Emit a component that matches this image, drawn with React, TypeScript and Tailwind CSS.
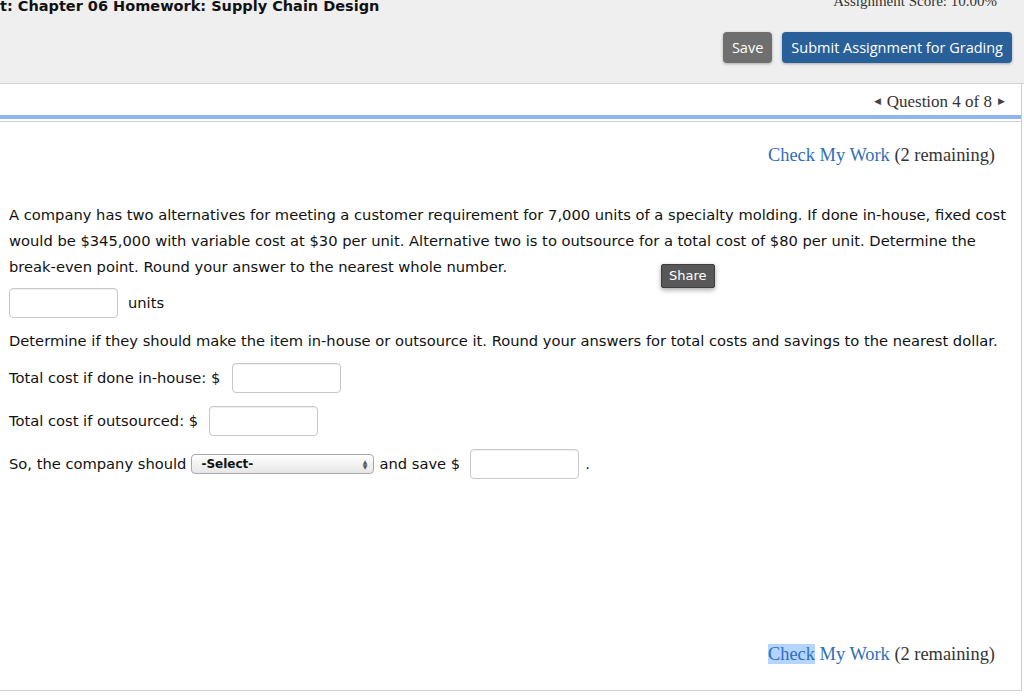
import React from 'react';

const sans = "font-['DejaVu_Sans',Verdana,sans-serif]";
const serif = "font-['Liberation_Serif',Georgia,serif]";

const AnswerBox: React.FC<{ className?: string }> = ({ className = '' }) => (
  <input
    type="text"
    className={`h-[30px] w-[109px] rounded-[4px] border border-[#c8c8c8] bg-white shadow-[inset_0_1px_1px_rgba(0,0,0,0.06)] ${className}`}
  />
);

const CheckMyWork: React.FC<{ highlight?: boolean }> = ({ highlight }) => (
  <div className={`${serif} text-[18.4px] leading-[22px] text-[#333]`}>
    <span className="text-[#2f6ebd]">
      {highlight ? <span className="bg-[#b4d5fd]">Check</span> : 'Check'} My Work
    </span>{' '}
    (2 remaining)
  </div>
);

const App: React.FC = () => {
  return (
    <div className="relative h-[696px] w-[1024px] overflow-hidden bg-white">
      {/* header */}
      <div className="flex h-[84px] justify-between border-b border-[#d2d2d2] bg-[#efefef]">
        <h1 className={`${sans} -mt-[4px] text-[14.5px] font-bold leading-[20px] text-[#111]`}>
          t: Chapter 06 Homework: Supply Chain Design
        </h1>
        <div className="flex flex-col items-end pr-[12px]">
          <div className={`${serif} -mt-[9px] pr-[15px] text-[15px] leading-[20px] text-[#333]`}>
            Assignment Score: 10.00%
          </div>
          <div className="mt-[21px] flex gap-[10px]">
            <button className="h-[31px] rounded-[4px] bg-[#6f6f6f] px-[9px] font-['Open_Sans',sans-serif] text-[14.5px] text-white shadow-[0_1px_3px_rgba(0,0,0,0.3)]">
              Save
            </button>
            <button className="h-[31px] rounded-[4px] bg-[#29609a] px-[9px] font-['Open_Sans',sans-serif] text-[14.5px] text-white shadow-[0_1px_3px_rgba(0,0,0,0.3)]">
              Submit Assignment for Grading
            </button>
          </div>
        </div>
      </div>

      {/* question panel */}
      <div className="h-[607px] w-[1022px] border-r border-b border-[#cfcfcf]">
        <div className={`${serif} flex h-[31px] items-center justify-end gap-[6px] pt-[5px] pr-[16px] text-[17px] text-[#333]`}>
          <span className="text-[9px] text-[#444]">◀</span>
          <span>Question 4 of 8</span>
          <span className="text-[9px] text-[#444]">▶</span>
        </div>
        <div className="h-[4px] bg-[#8fb4f0]" />
        <div className="mt-[2px] h-px bg-[#d3d3d3]" />

        <div className="relative">
          <div className="flex justify-end pr-[26px] pt-[22px]">
            <CheckMyWork />
          </div>

          <div className={`${sans} mt-[36px] pl-[9px] pr-[12px] text-[14.7px] leading-[26px] text-[#111]`}>
            <p>
              A company has two alternatives for meeting a customer requirement for 7,000 units of a specialty molding. If
              done in-house, fixed cost would be $345,000 with variable cost at $30 per unit. Alternative two is to
              outsource for a total cost of $80 per unit. Determine the break-even point. Round your answer to the nearest
              whole number.
            </p>
            <div className="mt-[8px] flex items-center gap-[10px]">
              <AnswerBox />
              <span>units</span>
            </div>
            <p className="mt-[10px]">
              Determine if they should make the item in-house or outsource it. Round your answers for total costs and
              savings to the nearest dollar.
            </p>
            <div className="mt-[9px] flex items-center gap-[12px]">
              <span>Total cost if done in-house: $</span>
              <AnswerBox />
            </div>
            <div className="mt-[13px] flex items-center gap-[11px]">
              <span>Total cost if outsourced: $</span>
              <AnswerBox />
            </div>
            <div className="mt-[13px] flex items-center">
              <span>So, the company should</span>
              <div className="ml-[5px] flex h-[20px] w-[183px] items-center justify-between rounded-[4px] border border-[#a9a9a9] bg-gradient-to-b from-white to-[#e6e6e6] pl-[9px] pr-[6px]">
                <span className="text-[12px] font-bold leading-none text-[#111]">-Select-</span>
                <span className="flex flex-col text-[6px] leading-[5px] text-[#555]">
                  <span>▲</span>
                  <span>▼</span>
                </span>
              </div>
              <span className="ml-[5px]">and save $</span>
              <AnswerBox className="ml-[10px]" />
              <span className="ml-[6px]">.</span>
            </div>
          </div>

          <div className="mt-[164px] flex justify-end pr-[26px]">
            <CheckMyWork highlight />
          </div>

          <div
            className={`${sans} absolute left-[661px] top-[142px] rounded-[2px] border border-[#3f3f3f] bg-[#585858] px-[7px] py-[2px] text-[13px] leading-[18px] text-white shadow-[0_2px_5px_rgba(0,0,0,0.35)]`}
          >
            Share
          </div>
        </div>
      </div>
    </div>
  );
};

export default App;
